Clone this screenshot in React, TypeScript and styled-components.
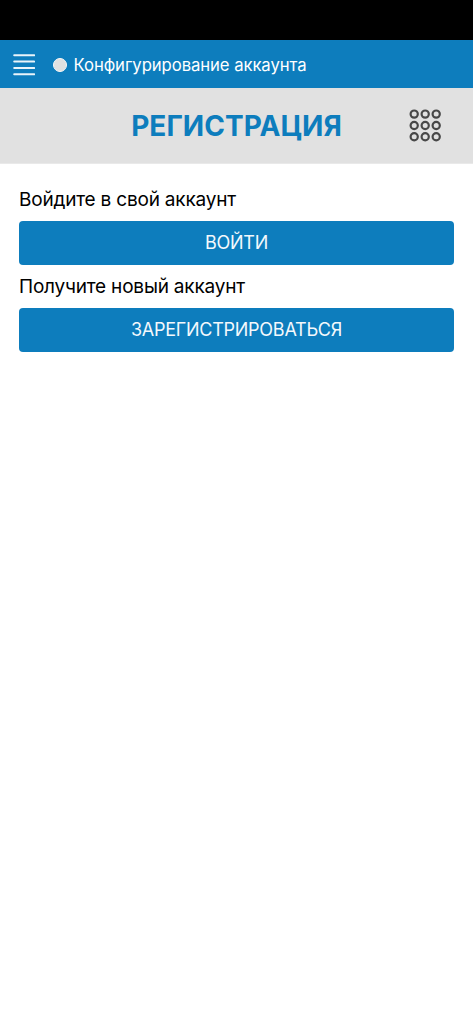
import React from 'react';
import styled, { createGlobalStyle } from 'styled-components';

const Global = createGlobalStyle`
  body { margin: 0; background: #fff; font-family: Inter, "Liberation Sans", sans-serif; }
`;
const Screen = styled.div`min-height: 1024px; background: #fff;`;
const StatusBar = styled.div`height: 40px; background: #000;`;
const TopBar = styled.header`
  display: flex; align-items: center; box-sizing: border-box;
  height: 48px; padding: 1px 0 0 13px; background: #0d7dbd; color: #fff;
`;
const MenuButton = styled.button`
  display: flex; padding: 0; border: 0; background: none; color: #e9f4fa;
`;
const StatusDot = styled.span`
  box-sizing: border-box; width: 14px; height: 14px; margin: 0 7px 0 17.5px;
  border: 1.5px solid #f8f8f8; border-radius: 50%; background: #e1e1e1;
`;
const StatusText = styled.span`
  font-size: 16.7px; line-height: 24px; letter-spacing: -0.08px; white-space: nowrap;
`;
const TitleBar = styled.div`
  display: grid; grid-template-columns: 64px 1fr 64px; align-items: center;
  box-sizing: border-box; height: 76px; border-bottom: 1px solid #e9e9e9; background: #e1e1e1;
`;
const Title = styled.h1`
  grid-column: 2; margin: 0; padding-top: 1px; text-align: center; white-space: nowrap;
  font-size: 28px; line-height: 36px; font-weight: 700; letter-spacing: 0.05px; color: #0d7dbd;
`;
const KeypadButton = styled.button`
  display: flex; padding: 0; border: 0; background: none; color: #484848;
`;
const Content = styled.main`
  display: flex; flex-direction: column; padding: 22.5px 19px 0;
`;
const Label = styled.p`
  margin: 0; height: 34px; line-height: 26px; font-size: 19px;
  letter-spacing: -0.2px; color: #000; white-space: nowrap;
`;
const Action = styled.button`
  height: 44px; margin: 0 0 9px; padding: 0 0 1px; border: 0; border-radius: 4px;
  background: #0d7dbd; color: #f3f8fc; font-family: inherit; font-size: 18px; letter-spacing: -0.25px;
`;

const keypadRows = [5.1, 16.5, 27.7];
const keypadColumns = [5.2, 16.2, 27.2];

export default function App() {
  return (
    <Screen>
      <Global />
      <StatusBar />
      <TopBar>
        <MenuButton aria-label="Меню">
          <svg width="22" height="24" viewBox="0 0 22 24" stroke="currentColor" strokeWidth="2" strokeLinecap="round">
            <path d="M1.2 2.2h20M1.2 8.6h20M1.2 15h20M1.2 21.3h20" />
          </svg>
        </MenuButton>
        <StatusDot />
        <StatusText>Конфигурирование аккаунта</StatusText>
      </TopBar>
      <TitleBar>
        <Title>РЕГИСТРАЦИЯ</Title>
        <KeypadButton aria-label="Клавиатура">
          <svg width="32" height="34" viewBox="0 0 32 34" fill="none" stroke="currentColor" strokeWidth="2.2">
            {keypadRows.map((y) =>
              keypadColumns.map((x) => <circle key={`${x}-${y}`} cx={x} cy={y} r="3.6" />)
            )}
          </svg>
        </KeypadButton>
      </TitleBar>
      <Content>
        <Label>Войдите в свой аккаунт</Label>
        <Action>ВОЙТИ</Action>
        <Label>Получите новый аккаунт</Label>
        <Action>ЗАРЕГИСТРИРОВАТЬСЯ</Action>
      </Content>
    </Screen>
  );
}
